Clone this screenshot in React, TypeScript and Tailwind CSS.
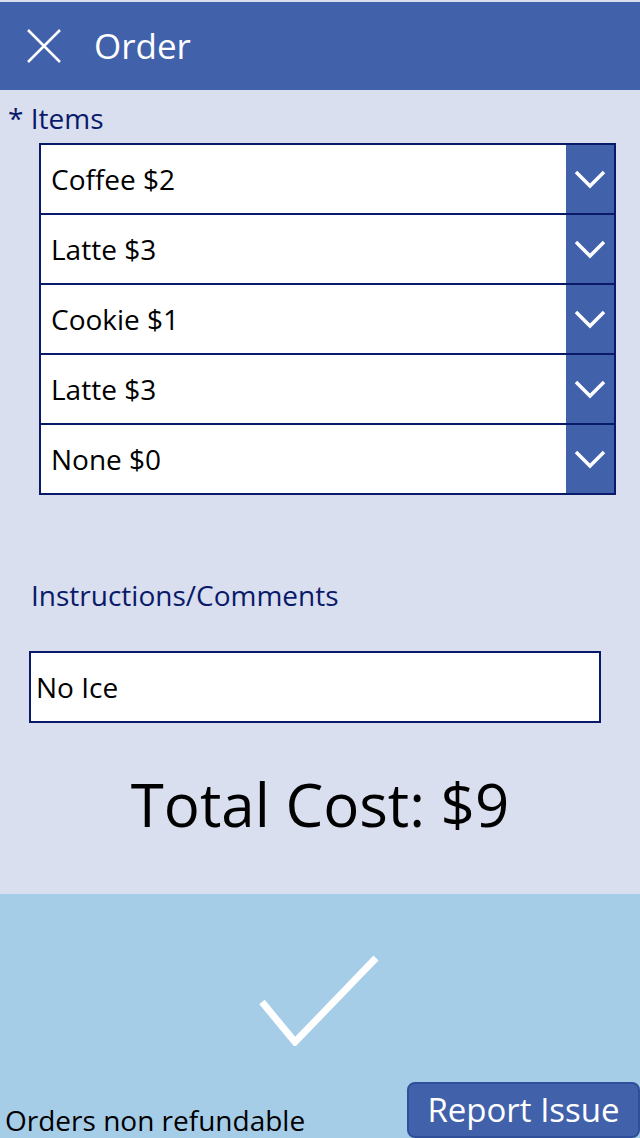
import React from 'react';

const items = ['Coffee $2', 'Latte $3', 'Cookie $1', 'Latte $3', 'None $0'];

function Chevron() {
  return (
    <svg width="32" height="20" viewBox="0 0 32 20" fill="none">
      <path d="M2 3 L16 17 L30 3" stroke="white" strokeWidth="3.5" />
    </svg>
  );
}

function ItemDropdown({ label, first }: { label: string; first: boolean }) {
  return (
    <div className={`flex ${first ? 'h-[68px]' : 'h-[70px] border-t-2 border-[#0a1a6b]'}`}>
      <div className="flex flex-1 items-center bg-white pl-[10px] text-[28px] text-black">{label}</div>
      <div className="flex w-[48px] items-center justify-center bg-[#4161ab]">
        <Chevron />
      </div>
    </div>
  );
}

export default function App() {
  return (
    <div className="flex h-[1138px] flex-col overflow-hidden bg-[#d9dfee] font-['Open_Sans',sans-serif]">
      <div className="h-[2px]" />

      {/* Header */}
      <div className="flex h-[88px] items-center bg-[#4161ab] text-white">
        <svg className="ml-[27px]" width="34" height="34" viewBox="0 0 34 34" fill="none">
          <path d="M1 1 L33 33 M33 1 L1 33" stroke="white" strokeWidth="2.5" />
        </svg>
        <span className="ml-[33px] text-[35px] leading-none">Order</span>
      </div>

      {/* Form */}
      <div className="flex h-[805px] flex-col">
        <div className="mt-[10px] pl-[8px] text-[28px] leading-[36px] text-[#0a1a6b]">* Items</div>
        <div className="ml-[39px] mt-[7px] w-[577px] border-2 border-[#0a1a6b]">
          {items.map((item, i) => (
            <ItemDropdown key={i} label={item} first={i === 0} />
          ))}
        </div>

        <div className="mt-[82px] pl-[31px] text-[28px] leading-[36px] text-[#0a1a6b]">Instructions/Comments</div>
        <div className="ml-[29px] mt-[38px] flex h-[72px] w-[572px] items-center border-2 border-[#0a1a6b] bg-white pl-[5px] text-[28px] text-black">
          No Ice
        </div>

        <div className="mt-[41px] text-center text-[60px] leading-[80px] text-black">Total Cost: $9</div>
      </div>

      {/* Footer */}
      <div className="flex flex-1 flex-col bg-[#a6cde8]">
        <div className="mt-[60px] flex justify-center">
          <svg width="124" height="92" viewBox="0 0 124 92" fill="none">
            <path d="M4 48 L37 88 L118 4" stroke="white" strokeWidth="7" />
          </svg>
        </div>
        <div className="mt-[36px] flex items-end justify-between">
          <span className="pl-[5px] text-[28px] leading-[36px] text-black">Orders non refundable</span>
          <button className="flex h-[56px] w-[233px] items-center justify-center rounded-[8px] border-2 border-[#2f4f9a] bg-[#4161ab] text-[33px] text-white">
            Report Issue
          </button>
        </div>
      </div>
    </div>
  );
}
